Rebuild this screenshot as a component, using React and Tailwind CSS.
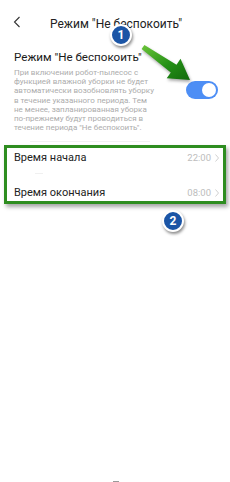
export default function App() {
  return (
    <div
      className="relative w-[230px] h-[482px] overflow-hidden bg-white"
      style={{ fontFamily: "Roboto, 'Noto Sans', sans-serif" }}
    >
      {/* header */}
      <div className="relative flex items-center h-[44px]">
        <svg className="absolute left-[13px] top-[16px]" width="8" height="12" viewBox="0 0 8 12">
          <path d="M6.5 1 L1.5 6 L6.5 11" fill="none" stroke="#333" strokeWidth="1.1" />
        </svg>
        <div className="w-full text-center text-[12px] leading-none text-[#222] pl-[2px] mt-[3px]">
          Режим "Не беспокоить"
        </div>
      </div>

      {/* do-not-disturb section */}
      <div className="flex items-center pl-[14px] pr-[12px] pt-[5px]">
        <div className="flex-1">
          <div className="text-[11.6px] leading-[16px] text-[#1a1a1a]">Режим "Не беспокоить"</div>
          <p className="mt-[3px] text-[8px] leading-[9.2px] text-[#acacac]">
            При включении робот-пылесос с<br />
            функцией влажной уборки не будет<br />
            автоматически возобновлять уборку<br />
            в течение указанного периода. Тем<br />
            не менее, запланированная уборка<br />
            по-прежнему будут проводиться в<br />
            течение периода "Не беспокоить".
          </p>
        </div>
        <div className="flex items-center justify-end w-[32px] h-[18px] mb-[2px] rounded-full bg-[#4d8ef5] pr-[2px]">
          <div className="w-[14px] h-[14px] rounded-full bg-white" />
        </div>
      </div>

      <div className="mt-[9px] ml-[30px] mr-[80px] h-px bg-[#f1f1f1]" />

      {/* time rows, framed */}
      <div className="mt-[3px] mx-[4px] border-[3px] border-[#2e8d20] shadow-[2px_3px_4px_rgba(0,0,0,0.35)] bg-white">
        <div className="flex items-center justify-between h-[20px] pl-[7px] pr-[4px]">
          <span className="text-[11px] text-[#222]">Время начала</span>
          <span className="flex items-center gap-[4px] text-[9.5px] text-[#bdbdbd]">
            22:00
            <svg width="4" height="8" viewBox="0 0 4 8">
              <path d="M0.5 0.5 L3.5 4 L0.5 7.5" fill="none" stroke="#c4c4c4" strokeWidth="0.8" />
            </svg>
          </span>
        </div>
        <div className="h-[16px] pt-[5px]">
          <div className="ml-[28px] mr-[180px] h-px bg-[#f0f0f0]" />
        </div>
        <div className="flex items-center justify-between h-[17px] pl-[7px] pr-[4px]">
          <span className="text-[11px] text-[#222]">Время окончания</span>
          <span className="flex items-center gap-[4px] text-[9.5px] text-[#bdbdbd]">
            08:00
            <svg width="4" height="8" viewBox="0 0 4 8">
              <path d="M0.5 0.5 L3.5 4 L0.5 7.5" fill="none" stroke="#c4c4c4" strokeWidth="0.8" />
            </svg>
          </span>
        </div>
      </div>

      {/* annotation arrow */}
      <svg
        className="absolute left-0 top-0 pointer-events-none"
        width="230"
        height="120"
        style={{ filter: "drop-shadow(1px 2px 1.5px rgba(0,0,0,0.35))" }}
      >
        <defs>
          <linearGradient id="ag" x1="0" y1="0" x2="1" y2="1">
            <stop offset="0" stopColor="#6cc43a" />
            <stop offset="0.55" stopColor="#249016" />
            <stop offset="1" stopColor="#126a0c" />
          </linearGradient>
        </defs>
        <polygon
          points="144.4,45.1 176.5,64.8 180.5,58.7 190,80 166.7,78.3 170.8,72.6 141.6,48.9"
          fill="url(#ag)"
        />
      </svg>

      {/* badges */}
      <div className="absolute left-[110px] top-[24px] flex items-center justify-center w-[22px] h-[22px] rounded-full bg-[#1b55a6] border-2 border-white shadow-[1px_2px_3px_rgba(0,0,0,0.45)] text-white text-[12px] font-bold leading-none">
        1
      </div>
      <div className="absolute left-[162px] top-[210px] flex items-center justify-center w-[22px] h-[22px] rounded-full bg-[#1b55a6] border-2 border-white shadow-[1px_2px_3px_rgba(0,0,0,0.45)] text-white text-[12px] font-bold leading-none">
        2
      </div>

      <div className="absolute bottom-0 left-[113px] w-[6px] h-px bg-[#999]" />
    </div>
  );
}
